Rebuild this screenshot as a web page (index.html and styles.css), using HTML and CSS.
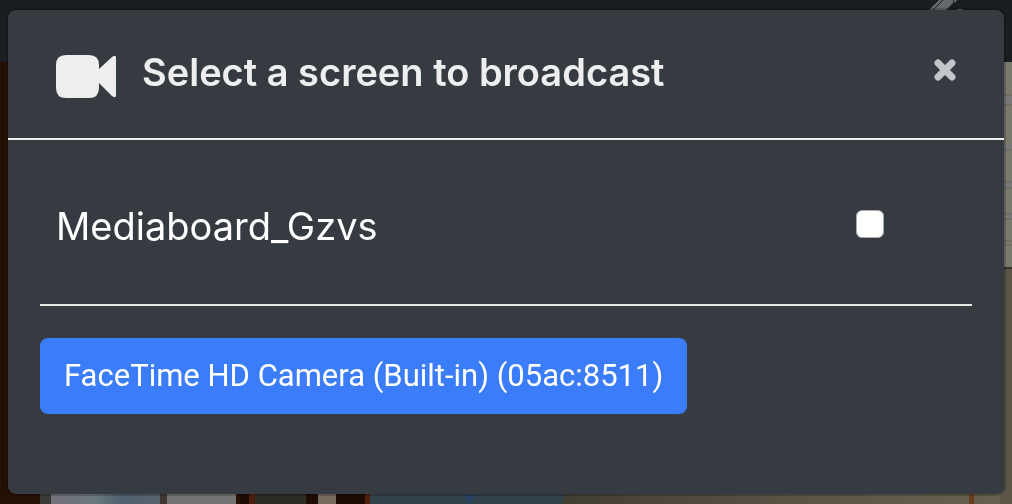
FILE: index.html
```html
<!DOCTYPE html>
<html lang="en">
<head>
  <meta charset="utf-8">
  <meta name="viewport" content="width=device-width, initial-scale=1">
  <title>Select a screen to broadcast</title>
  <link rel="stylesheet" href="styles.css">
</head>
<body class="page">
  <svg class="backdrop" viewBox="0 0 1012 504" preserveAspectRatio="none" aria-hidden="true">
    <defs>
      <linearGradient id="wood" x1="0" x2="1" y1="0" y2="0">
        <stop offset="0" stop-color="#2a1206"/>
        <stop offset="0.3" stop-color="#1f0c04"/>
        <stop offset="0.6" stop-color="#2d1206"/>
        <stop offset="1" stop-color="#1e0b04"/>
      </linearGradient>
      <linearGradient id="glass" x1="0" x2="1" y1="0" y2="0">
        <stop offset="0" stop-color="#75707a"/>
        <stop offset="0.4" stop-color="#6b7a7c"/>
        <stop offset="0.65" stop-color="#515f70"/>
        <stop offset="1" stop-color="#59636e"/>
      </linearGradient>
      <linearGradient id="wall" x1="0" x2="1" y1="0" y2="0">
        <stop offset="0" stop-color="#423e31"/>
        <stop offset="0.5" stop-color="#595346"/>
        <stop offset="1" stop-color="#66624f"/>
      </linearGradient>
    </defs>
    <rect width="1012" height="504" fill="#1e0b04"/>
    <rect y="62" width="10" height="442" fill="url(#wood)"/>
    <rect y="484" width="240" height="20" fill="#260f06"/>
    <rect x="40" y="484" width="11" height="20" fill="#393c36"/>
    <rect x="51" y="484" width="109" height="20" fill="url(#glass)"/>
    <rect x="160" y="484" width="7" height="20" fill="#403632"/>
    <rect x="167" y="484" width="69" height="20" fill="#747373"/>
    <rect x="249" y="484" width="6" height="20" fill="#4e1e0e"/>
    <rect x="255" y="484" width="51" height="20" fill="#2d2c25"/>
    <rect x="318" y="484" width="18" height="20" fill="#756b5d"/>
    <rect x="365" y="484" width="5" height="20" fill="#51200d"/>
    <rect x="370" y="484" width="198" height="20" fill="#34424b"/>
    <path d="M464 494h12q-2 8-5 10h-3q-3-4-4-10z" fill="#29415c"/>
    <path d="M568 484h444v20H562z" fill="url(#wall)"/>
    <rect x="969" y="494" width="5" height="10" fill="#6b3d1c"/>
    <rect x="1000" y="62" width="12" height="206" fill="#7a796d"/>
    <path d="M1000 96h12v9h-12zM1000 144h12v6h-12zM1000 182h12v6h-12zM1000 214h12v5h-12z" fill="#777777"/>
    <path d="M1000 95h12M1000 105h12M1000 150h12M1000 182h12M1000 188h12M1000 214h12M1000 219h12M1000 241h12M1000 245h12" stroke="#66645a"/>
    <rect x="1000" y="268" width="12" height="236" fill="#5b5547"/>
    <path d="M1000 268h12" stroke="#35332c" stroke-width="2"/>
    <rect width="1012" height="62" fill="#1a1e20"/>
    <path d="M929 10L939 0h14v3l-7 7z" fill="#66686a"/>
    <path d="M933 10l10-10" stroke="#1a1e20"/>
    <path d="M954 2l3-3M957 10h5" stroke="#66686a" stroke-width="2"/>
  </svg>

  <main class="dialog" role="dialog" aria-labelledby="dialog-title">
    <header class="dialog-header">
      <svg class="camera-icon" viewBox="0 0 60 43" aria-hidden="true">
        <path d="M10 0h23q10 0 10 10v4L56 2q4-3 4 1v37q0 4-4 1L43 28v5q0 10-10 10H10Q0 43 0 33V10Q0 0 10 0z"/>
      </svg>
      <h1 class="dialog-title" id="dialog-title">Select a screen to broadcast</h1>
      <button class="close-button" type="button" aria-label="Close">
        <svg class="close-icon" viewBox="0 0 22 22" aria-hidden="true">
          <path d="M4 4l14 14M18 4L4 18"/>
        </svg>
      </button>
    </header>
    <div class="dialog-body">
      <div class="screen-row">
        <label class="screen-name" for="screen-mediaboard">Mediaboard_Gzvs</label>
        <input class="screen-check" type="checkbox" id="screen-mediaboard">
      </div>
      <button class="camera-button" type="button">FaceTime HD Camera (Built-in) (05ac:8511)</button>
    </div>
  </main>
</body>
</html>
```

FILE: styles.css
```css
* {
  box-sizing: border-box;
}

.page {
  margin: 0;
  padding: 10px 8px;
  background: #1a1e20;
  font-family: Inter, "Liberation Sans", sans-serif;
}

.backdrop {
  position: fixed;
  inset: 0;
  z-index: -1;
  width: 100%;
  height: 100%;
}

.dialog {
  border-radius: 8px;
  background: #363a41;
  color: #fff;
  box-shadow: 0 0 0 2px rgba(0, 0, 0, 0.2);
}

.dialog-header {
  display: flex;
  align-items: center;
  gap: 26px;
  padding: 32px 48px 36px;
  border-bottom: 2px solid #eee;
  color: #eee;
}

.camera-icon {
  flex: none;
  width: 60px;
  height: 43px;
  margin-top: 8px;
  fill: currentColor;
}

.dialog-title {
  flex: 1;
  margin: 0;
  font-size: 38px;
  font-weight: 600;
  line-height: 60px;
}

.close-button {
  display: flex;
  flex: none;
  margin-bottom: 4px;
  padding: 0;
  border: 0;
  background: none;
  color: #c3c5c8;
}

.close-icon {
  width: 22px;
  height: 22px;
  fill: none;
  stroke: currentColor;
  stroke-width: 7;
  stroke-linecap: round;
}

.dialog-body {
  padding: 32px 32px 80px;
}

.screen-row {
  display: flex;
  align-items: center;
  justify-content: space-between;
  margin-bottom: 32px;
  padding: 24px 88px 48px 16px;
  border-bottom: 2px solid #e8e8e4;
}

.screen-name {
  font-size: 38px;
  line-height: 60px;
}

.screen-check {
  appearance: none;
  width: 28px;
  height: 28px;
  margin: 0 0 4px;
  border: 1px solid #aaa;
  border-radius: 6px;
  background: #fff;
}

.screen-check:checked {
  background: #3b7df8;
}

.camera-button {
  display: block;
  padding: 14px 24px;
  border: 0;
  border-radius: 8px;
  background: #3b7df8;
  color: #fff;
  font-family: Roboto, "Liberation Sans", sans-serif;
  font-size: 31px;
  line-height: 48px;
}
```
